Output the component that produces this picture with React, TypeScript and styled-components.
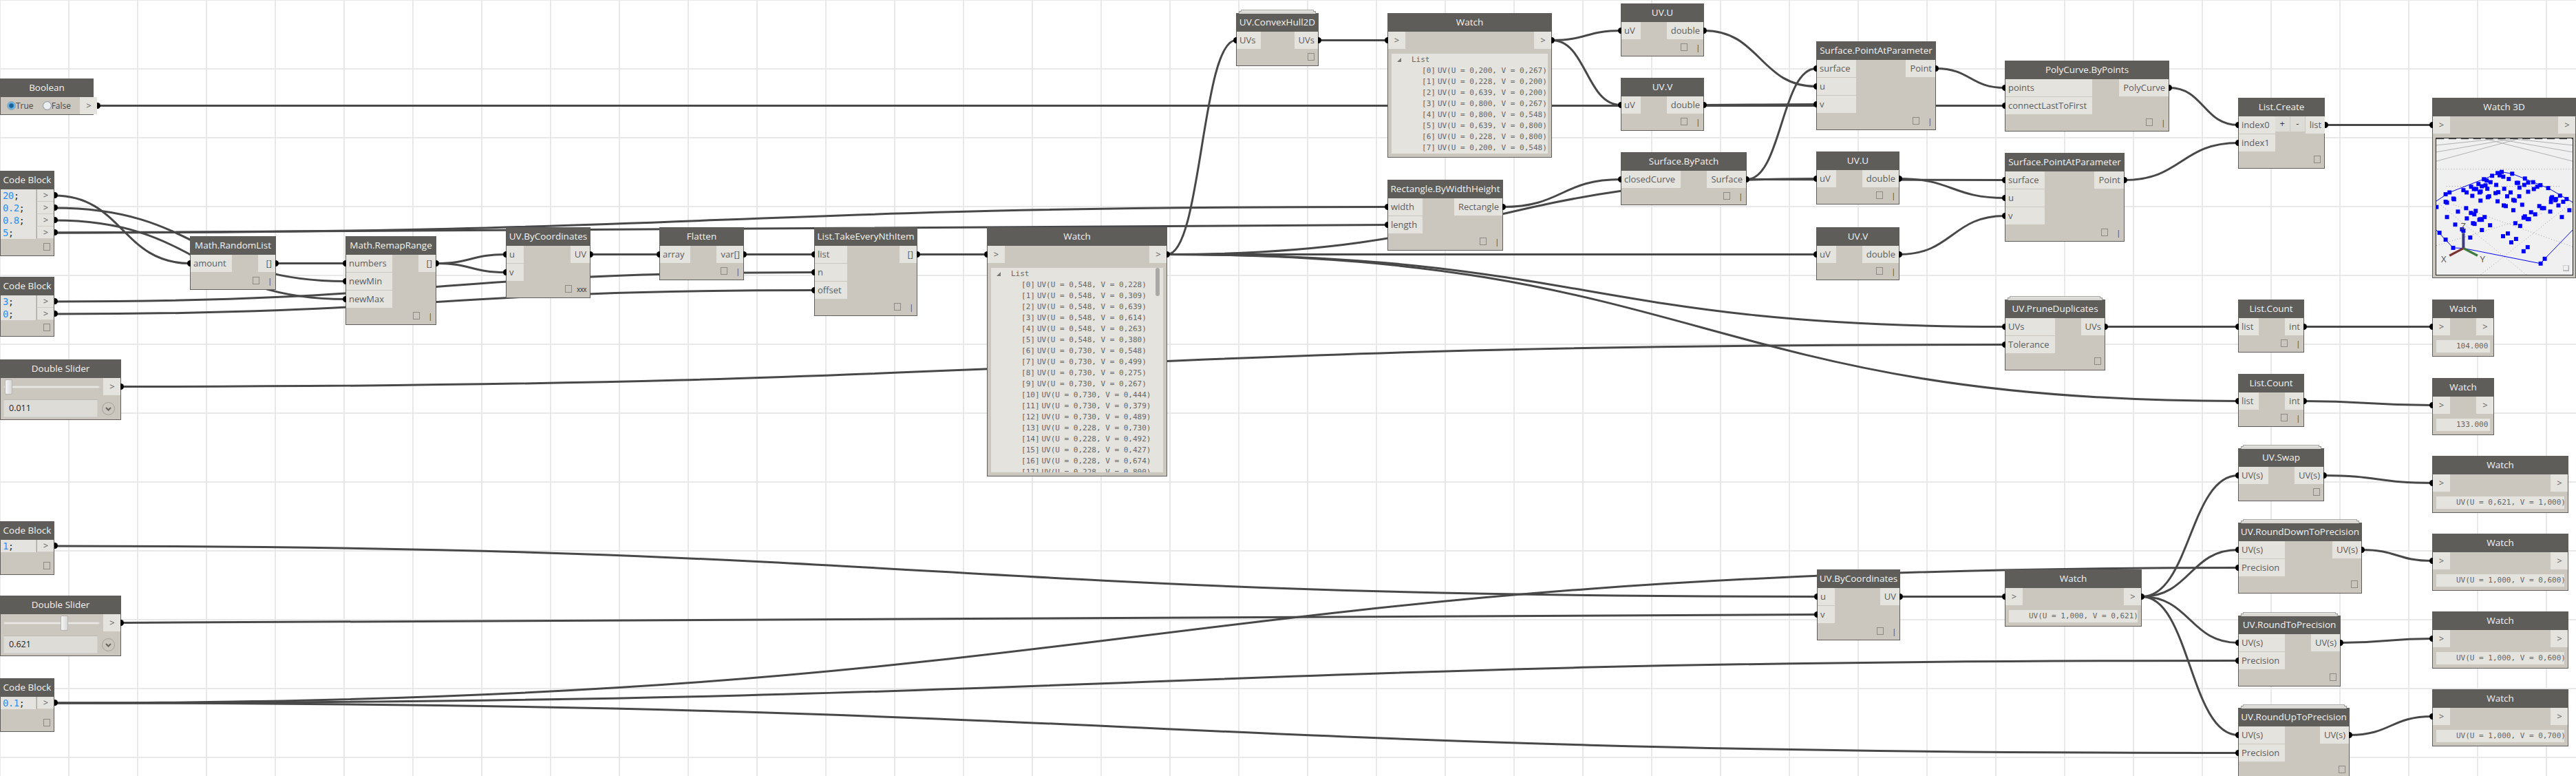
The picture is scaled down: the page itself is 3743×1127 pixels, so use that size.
import React from "react";
import styled, { createGlobalStyle } from "styled-components";

const Global = createGlobalStyle`
  html, body { margin: 0; padding: 0; background: #fff; overflow: hidden; }
  * { box-sizing: border-box; }
`;

const Canvas = styled.div`
  position: relative;
  width: 3743px;
  height: 1127px;
  overflow: hidden;
  background-color: #fff;
  background-image:
    linear-gradient(to right, #e8e8e8 2px, transparent 2px),
    linear-gradient(to bottom, #e8e8e8 2px, transparent 2px);
  background-size: 100px 100px;
  background-position: -1px -1px;
  font-family: "Open Sans", "Noto Sans", sans-serif;
`;

const Wires = styled.svg`
  position: absolute;
  left: 0;
  top: 0;
`;

const Wire = styled.path`
  fill: none;
  stroke: #484848;
  stroke-width: 3;
`;

const NodeBox = styled.div<{ $x: number; $y: number; $w: number; $h: number; $stacked?: boolean }>`
  position: absolute;
  left: ${(p) => p.$x}px;
  top: ${(p) => p.$y}px;
  width: ${(p) => p.$w}px;
  height: ${(p) => p.$h}px;
  display: flex;
  flex-direction: column;
  background: #cbc6be;
  border: 1px solid #5e5d5a;
  border-top: 0;
  ${(p) =>
    p.$stacked
      ? `
    &::before {
      content: "";
      position: absolute;
      left: 3px;
      right: 3px;
      top: -3px;
      height: 3px;
      background: #d9d7d2;
      border: 1px solid #9a9a96;
      border-bottom: 0;
    }
    &::after {
      content: "";
      position: absolute;
      left: 6px;
      right: 6px;
      top: -5px;
      height: 2px;
      background: #e2e0dc;
      border: 1px solid #a8a8a4;
      border-bottom: 0;
    }
  `
      : ""}
`;

const Header = styled.div`
  flex: none;
  height: 27px;
  margin: 0 -1px;
  background: #5e5d5a;
  color: #f4f4f2;
  font-size: 13.5px;
  line-height: 27px;
  text-align: center;
  white-space: nowrap;
  overflow: hidden;
`;

const Ports = styled.div`
  display: flex;
  justify-content: space-between;
  align-items: flex-start;
`;

const Column = styled.div`
  display: flex;
  flex-direction: column;
  gap: 1px;
`;

const Port = styled.div<{ $side: "in" | "out"; $wired?: boolean }>`
  position: relative;
  height: 25px;
  min-width: 25px;
  background: #e4e3de;
  color: #5c5c5c;
  font-size: 13px;
  line-height: 25px;
  white-space: nowrap;
  padding: ${(p) => (p.$side === "in" ? "0 8px 0 4px" : "0 5px 0 6px")};
  text-align: ${(p) => (p.$side === "in" ? "left" : "right")};
  ${(p) =>
    p.$wired
      ? `
    &::after {
      content: "";
      position: absolute;
      top: 8px;
      width: 5px;
      height: 9px;
      background: #000;
      ${
        p.$side === "in"
          ? "left: -5px; border-radius: 5px 0 0 5px;"
          : "right: -5px; border-radius: 0 5px 5px 0;"
      }
    }
  `
      : ""}
`;

const Chevron = styled(Port)`
  text-align: center;
  padding: 0 0 0 ${(p) => (p.$side === "in" ? "0" : "1px")};
  width: 25px;
`;

const PlusMinus = styled.div`
  width: 21px;
  height: 22px;
  background: #dedcd7;
  color: #333;
  font-size: 13px;
  line-height: 20px;
  text-align: center;
`;

const PlusMinusRow = styled.div`
  display: flex;
  gap: 1px;
  margin: 0 1px 0 0;
`;

const Footer = styled.div`
  margin-top: auto;
  display: flex;
  justify-content: flex-end;
  align-items: flex-end;
  padding: 0 5px 7px 0;
`;

const PreviewBox = styled.span`
  display: block;
  width: 10px;
  height: 11px;
  border: 1px solid #8b8a85;
`;

const Lacing = styled.span<{ $wide?: boolean }>`
  display: block;
  margin-left: ${(p) => (p.$wide ? "7px" : "13px")};
  color: #333;
  font-size: 10px;
  line-height: 10px;
  letter-spacing: ${(p) => (p.$wide ? "-0.6px" : "0")};
`;

const CodeRows = styled.div`
  display: flex;
  justify-content: space-between;
`;

const CodeArea = styled.div`
  flex: 1;
  background: #e5e3df;
  padding-left: 3px;
  font-family: "DejaVu Sans Mono", monospace;
  font-size: 14px;
  letter-spacing: -0.6px;
  line-height: 18px;
  color: #333;
`;

const Num = styled.span`
  color: #2f8ff0;
`;

const CodeOut = styled(Port)`
  height: 18px;
  width: 25px;
  margin: 0;
  padding: 0 0 0 1px;
  line-height: 17px;
  text-align: center;
  border-left: 1px solid #a9a69f;
  border-bottom: 1px solid #cfccc5;
  &::after {
    top: 4px;
    right: -6px;
  }
`;

const CodeColumn = styled.div`
  margin-left: 1px;
  display: flex;
  flex-direction: column;
`;

const BoolRow = styled.div`
  display: flex;
  align-items: center;
  justify-content: space-between;
`;

const RadioGroup = styled.div`
  display: flex;
  align-items: center;
  padding-left: 9px;
  color: #4a4a4a;
  font-size: 12px;
`;

const Radio = styled.span<{ $on?: boolean }>`
  display: block;
  width: 13px;
  height: 13px;
  border-radius: 50%;
  border: 1px solid #8c9aa6;
  background: ${(p) =>
    p.$on
      ? "radial-gradient(circle, #1a5f90 0 28%, #5fb0e8 55%, #dfe7ec 100%)"
      : "radial-gradient(circle, #eceff1 0 50%, #c5cacd 100%)"};
`;

const RadioLabel = styled.span`
  margin-right: 13px;
`;

const SliderRow = styled.div`
  display: flex;
  justify-content: space-between;
  align-items: center;
`;

const Track = styled.div`
  position: relative;
  width: 140px;
  height: 4px;
  margin-left: 4px;
  background: #e9e8e4;
  border: 1px solid #d3d1cb;
  border-radius: 2px;
`;

const Thumb = styled.div<{ $pos: number }>`
  position: absolute;
  left: ${(p) => p.$pos}px;
  top: -10px;
  width: 11px;
  height: 22px;
  border: 1px solid #b5b4b0;
  border-radius: 2px;
  background: linear-gradient(to right, #f6f6f6, #d8d8d8);
`;

const ValueRow = styled.div`
  display: flex;
  align-items: center;
  justify-content: space-between;
  padding: 6px 8px 0 4px;
`;

const ValueBox = styled.div`
  width: 137px;
  height: 26px;
  padding-left: 7px;
  background: #dedcd7;
  border: 1px solid #cfd0cf;
  border-top-color: #b9b7b1;
  color: #222;
  font-size: 12.5px;
  line-height: 24px;
`;

const Drop = styled.svg`
  display: block;
  flex: none;
`;

const WatchValue = styled.div`
  margin: 7px 5px 0;
  height: 18px;
  padding-left: 29px;
  background: #e4e3de;
  color: #666;
  font-family: "DejaVu Sans Mono", monospace;
  font-size: 11px;
  line-height: 18px;
  white-space: nowrap;
  overflow: hidden;
`;

const ListBox = styled.div`
  position: relative;
  margin: 7px 5px 5px;
  flex: 1;
  min-height: 0;
  background: #e4e3de;
  color: #666;
  font-family: "DejaVu Sans Mono", monospace;
  font-size: 11px;
  line-height: 16px;
  white-space: nowrap;
  overflow: hidden;
  padding-top: 1px;
`;

const ListHead = styled.div`
  display: flex;
  align-items: center;
  padding-left: 8px;
  height: 16px;
`;

const Triangle = styled.span`
  width: 0;
  height: 0;
  margin-right: 15px;
  border-left: 6px solid transparent;
  border-bottom: 6px solid #777;
`;

const ListRow = styled.div`
  display: flex;
  height: 16px;
  padding-left: 44px;
`;

const ListIndex = styled.span`
  margin-right: 3px;
`;

const ScrollThumb = styled.div`
  position: absolute;
  right: 5px;
  top: 0;
  width: 6px;
  height: 41px;
  border-radius: 3px;
  background: #aaa9a5;
`;

const View3D = styled.div`
  flex: none;
  width: 200px;
  height: 200px;
  margin: 6px 0 0 4px;
  background: #f0f0f0;
  border: 1px solid #222;
`;

type Kind = "fn" | "code" | "watch" | "slider" | "bool" | "watch3d" | "create";

type NodeDef = {
  id: string;
  title: string;
  kind: Kind;
  x: number;
  y: number;
  w: number;
  h: number;
  inputs?: string[];
  outputs?: string[];
  lacing?: string;
  stacked?: boolean;
  code?: [string, string][];
  value?: string;
  list?: [string, string][];
  scroll?: boolean;
  thumb?: number;
};

const fn = (
  id: string,
  title: string,
  x: number,
  y: number,
  w: number,
  h: number,
  inputs: string[],
  outputs: string[],
  lacing?: string,
  stacked?: boolean
): NodeDef => ({ id, title, kind: "fn", x, y, w, h, inputs, outputs, lacing, stacked });

const watch = (id: string, x: number, y: number, w: number, value: string): NodeDef => ({
  id,
  title: "Watch",
  kind: "watch",
  x,
  y,
  w,
  h: 83,
  inputs: [">"],
  outputs: [">"],
  value,
});

const bigList: [string, string][] = [
  ["0,548", "0,228"], ["0,548", "0,309"], ["0,548", "0,639"], ["0,548", "0,614"],
  ["0,548", "0,263"], ["0,548", "0,380"], ["0,730", "0,548"], ["0,730", "0,499"],
  ["0,730", "0,275"], ["0,730", "0,267"], ["0,730", "0,444"], ["0,730", "0,379"],
  ["0,730", "0,489"], ["0,228", "0,730"], ["0,228", "0,492"], ["0,228", "0,427"],
  ["0,228", "0,674"], ["0,228", "0,800"],
];

const hullList: [string, string][] = [
  ["0,200", "0,267"], ["0,228", "0,200"], ["0,639", "0,200"], ["0,800", "0,267"],
  ["0,800", "0,548"], ["0,639", "0,800"], ["0,228", "0,800"], ["0,200", "0,548"],
];

const nodes: NodeDef[] = [
  { id: "bool", title: "Boolean", kind: "bool", x: 0, y: 114, w: 136, h: 53, outputs: [">"] },
  {
    id: "cb1", title: "Code Block", kind: "code", x: 0, y: 248, w: 79, h: 124,
    code: [["20", ";"], ["0.2", ";"], ["0.8", ";"], ["5", ";"]],
  },
  {
    id: "cb2", title: "Code Block", kind: "code", x: 0, y: 402, w: 79, h: 87,
    code: [["3", ";"], ["0", ";"]],
  },
  { id: "s1", title: "Double Slider", kind: "slider", x: 0, y: 522, w: 176, h: 88, value: "0.011", thumb: 1, outputs: [">"] },
  { id: "cb3", title: "Code Block", kind: "code", x: 0, y: 757, w: 79, h: 78, code: [["1", ";"]] },
  { id: "s2", title: "Double Slider", kind: "slider", x: 0, y: 865, w: 176, h: 88, value: "0.621", thumb: 82, outputs: [">"] },
  { id: "cb4", title: "Code Block", kind: "code", x: 0, y: 985, w: 79, h: 78, code: [["0.1", ";"]] },
  fn("rand", "Math.RandomList", 276, 343, 125, 78, ["amount"], ["[]"], "|"),
  fn("remap", "Math.RemapRange", 502, 343, 132, 129, ["numbers", "newMin", "newMax"], ["[]"], "|"),
  fn("uv1", "UV.ByCoordinates", 735, 330, 123, 103, ["u", "v"], ["UV"], "xxx"),
  fn("flat", "Flatten", 958, 330, 123, 77, ["array"], ["var[]"], "|"),
  fn("take", "List.TakeEveryNthItem", 1183, 330, 150, 129, ["list", "n", "offset"], ["[]"], "|"),
  {
    id: "w1", title: "Watch", kind: "watch", x: 1434, y: 330, w: 262, h: 362,
    inputs: [">"], outputs: [">"], list: bigList, scroll: true,
  },
  fn("hull", "UV.ConvexHull2D", 1796, 19, 120, 77, ["UVs"], ["UVs"], undefined, true),
  {
    id: "w2", title: "Watch", kind: "watch", x: 2016, y: 19, w: 239, h: 210,
    inputs: [">"], outputs: [">"], list: hullList,
  },
  fn("rect", "Rectangle.ByWidthHeight", 2016, 261, 168, 103, ["width", "length"], ["Rectangle"], "|"),
  fn("u1", "UV.U", 2355, 5, 121, 77, ["uV"], ["double"], "|"),
  fn("v1", "UV.V", 2355, 113, 121, 77, ["uV"], ["double"], "|"),
  fn("patch", "Surface.ByPatch", 2355, 221, 183, 77, ["closedCurve"], ["Surface"], "|"),
  fn("pap1", "Surface.PointAtParameter", 2639, 60, 174, 129, ["surface", "u", "v"], ["Point"], "|"),
  fn("u2", "UV.U", 2639, 220, 121, 77, ["uV"], ["double"], "|"),
  fn("v2", "UV.V", 2639, 330, 121, 77, ["uV"], ["double"], "|"),
  fn("poly", "PolyCurve.ByPoints", 2913, 88, 239, 103, ["points", "connectLastToFirst"], ["PolyCurve"], "|"),
  fn("pap2", "Surface.PointAtParameter", 2913, 222, 174, 129, ["surface", "u", "v"], ["Point"], "|"),
  { id: "create", title: "List.Create", kind: "create", x: 3252, y: 142, w: 126, h: 103, inputs: ["index0", "index1"], outputs: ["list"] },
  { id: "w3d", title: "Watch 3D", kind: "watch3d", x: 3534, y: 142, w: 209, h: 262, inputs: [">"], outputs: [">"] },
  fn("prune", "UV.PruneDuplicates", 2913, 435, 146, 103, ["UVs", "Tolerance"], ["UVs"], undefined, true),
  fn("count1", "List.Count", 3252, 435, 96, 77, ["list"], ["int"], "|"),
  fn("count2", "List.Count", 3252, 543, 96, 77, ["list"], ["int"], "|"),
  watch("wc1", 3534, 435, 90, "104.000"),
  watch("wc2", 3534, 549, 90, "133.000"),
  fn("uv2", "UV.ByCoordinates", 2640, 827, 121, 103, ["u", "v"], ["UV"], "|"),
  watch("wm", 2913, 827, 199, "UV(U = 1,000, V = 0,621)"),
  fn("swap", "UV.Swap", 3252, 651, 125, 77, ["UV(s)"], ["UV(s)"], undefined, true),
  fn("down", "UV.RoundDownToPrecision", 3252, 759, 180, 103, ["UV(s)", "Precision"], ["UV(s)"], undefined, true),
  fn("round", "UV.RoundToPrecision", 3252, 894, 149, 103, ["UV(s)", "Precision"], ["UV(s)"], undefined, true),
  fn("up", "UV.RoundUpToPrecision", 3252, 1028, 162, 103, ["UV(s)", "Precision"], ["UV(s)"], undefined, true),
  watch("wa", 3534, 662, 198, "UV(U = 0,621, V = 1,000)"),
  watch("wb", 3534, 775, 198, "UV(U = 1,000, V = 0,600)"),
  watch("wr", 3534, 888, 198, "UV(U = 1,000, V = 0,600)"),
  watch("wd", 3534, 1001, 198, "UV(U = 1,000, V = 0,700)"),
];

type Link = [string, number, string, number];

const links: Link[] = [
  ["bool", 0, "poly", 1],
  ["cb1", 0, "rand", 0],
  ["cb1", 1, "remap", 1],
  ["cb1", 2, "remap", 2],
  ["cb1", 3, "rect", 0],
  ["cb1", 3, "rect", 1],
  ["cb2", 0, "take", 1],
  ["cb2", 1, "take", 2],
  ["s1", 0, "prune", 1],
  ["rand", 0, "remap", 0],
  ["remap", 0, "uv1", 0],
  ["remap", 0, "uv1", 1],
  ["uv1", 0, "flat", 0],
  ["flat", 0, "take", 0],
  ["take", 0, "w1", 0],
  ["w1", 0, "hull", 0],
  ["w1", 0, "v2", 0],
  ["w1", 0, "u2", 0],
  ["w1", 0, "prune", 0],
  ["w1", 0, "count2", 0],
  ["hull", 0, "w2", 0],
  ["w2", 0, "u1", 0],
  ["w2", 0, "v1", 0],
  ["u1", 0, "pap1", 1],
  ["v1", 0, "pap1", 2],
  ["rect", 0, "patch", 0],
  ["patch", 0, "pap1", 0],
  ["patch", 0, "pap2", 0],
  ["u2", 0, "pap2", 1],
  ["v2", 0, "pap2", 2],
  ["pap1", 0, "poly", 0],
  ["poly", 0, "create", 0],
  ["pap2", 0, "create", 1],
  ["create", 0, "w3d", 0],
  ["prune", 0, "count1", 0],
  ["count1", 0, "wc1", 0],
  ["count2", 0, "wc2", 0],
  ["cb3", 0, "uv2", 0],
  ["s2", 0, "uv2", 1],
  ["uv2", 0, "wm", 0],
  ["wm", 0, "swap", 0],
  ["wm", 0, "down", 0],
  ["wm", 0, "round", 0],
  ["wm", 0, "up", 0],
  ["cb4", 0, "down", 1],
  ["cb4", 0, "round", 1],
  ["cb4", 0, "up", 1],
  ["swap", 0, "wa", 0],
  ["down", 0, "wb", 0],
  ["round", 0, "wr", 0],
  ["up", 0, "wd", 0],
];

const byId = new Map(nodes.map((n) => [n.id, n]));

const portY = (n: NodeDef, i: number) =>
  n.kind === "code" ? n.y + 27 + 9 + 18 * i : n.y + 27 + 12.5 + 26 * i;

const wirePath = ([a, i, b, j]: Link) => {
  const s = byId.get(a)!;
  const t = byId.get(b)!;
  const x0 = s.x + s.w;
  const y0 = portY(s, i);
  const x1 = t.x;
  const y1 = portY(t, j);
  const d = Math.abs(x1 - x0) / 2;
  return `M${x0} ${y0} C${x0 + d} ${y0} ${x1 - d} ${y1} ${x1} ${y1}`;
};

const wiredIn = new Set(links.map((l) => `${l[2]}:${l[3]}`));
const wiredOut = new Set(links.map((l) => `${l[0]}:${l[1]}`));

const NodeFooter = ({ lacing }: { lacing?: string }) => (
  <Footer>
    <PreviewBox />
    {lacing ? <Lacing $wide={lacing === "xxx"}>{lacing}</Lacing> : null}
  </Footer>
);

const InputColumn = ({ n }: { n: NodeDef }) => (
  <Column>
    {(n.inputs ?? []).map((label, i) =>
      label === ">" ? (
        <Chevron key={i} $side="in" $wired={wiredIn.has(`${n.id}:${i}`)}>
          {label}
        </Chevron>
      ) : (
        <Port key={i} $side="in" $wired={wiredIn.has(`${n.id}:${i}`)}>
          {label}
        </Port>
      )
    )}
  </Column>
);

const OutputColumn = ({ n }: { n: NodeDef }) => (
  <Column>
    {(n.outputs ?? []).map((label, i) =>
      label === ">" ? (
        <Chevron key={i} $side="out" $wired={wiredOut.has(`${n.id}:${i}`)}>
          {label}
        </Chevron>
      ) : (
        <Port key={i} $side="out" $wired={wiredOut.has(`${n.id}:${i}`)}>
          {label}
        </Port>
      )
    )}
  </Column>
);

const squares: number[][] = [
  [342,357],[324,362],[333,372],[349,378],[388,365],[300,374],[264,389],[276,395],[293,402],[373,388],
  [444,386],[240,410],[255,420],[271,416],[318,414],[408,405],[414,405],[441,414],[458,404],[480,402],
  [512,415],[498,422],[483,432],[546,428],[208,422],[220,432],[230,432],[174,437],[188,447],[113,447],
  [96,455],[279,431],[353,431],[420,426],[250,443],[245,447],[458,444],[381,447],[315,450],[327,446],
  [213,462],[287,464],[281,468],[366,464],[419,464],[563,468],[559,474],[580,476],[578,481],[598,461],
  [627,476],[612,488],[558,489],[130,474],[133,477],[96,488],[102,492],[249,483],[324,486],[393,480],
  [399,483],[432,501],[591,504],[507,507],[519,516],[528,516],[351,504],[360,507],[56,511],[186,516],
  [150,531],[228,528],[207,537],[222,543],[393,525],[471,534],[489,543],[555,531],[639,525],[102,555],
  [189,561],[267,555],[249,564],[244,567],[255,567],[444,552],[438,558],[456,564],[462,564],[606,555],
  [138,588],[216,582],[223,585],[291,591],[402,582],[423,594],[168,609],[174,615],[255,612],[69,624],
  [369,627],[348,639],[204,645],[96,654],[405,651],[384,666],[129,690],[456,687],[438,705],[531,738],[513,759],
];

const Preview = () => (
  <svg width="198" height="198" viewBox="55 210 598 598">
    <g stroke="#b0b0b0" strokeWidth="3" fill="none">
      <path d="M55 240L320 212M55 270L385 212M55 310L415 212M653 240L390 212M653 270L320 212M653 310L270 212" />
    </g>
    <path d="M55 212H653" stroke="#333" strokeWidth="3" strokeDasharray="34 20" />
    <g stroke="#9c9c9c" strokeWidth="3" fill="none" strokeDasharray="3 9">
      <path d="M250 808L653 490M450 808L60 490M55 680L520 540M653 685L130 500M60 345L650 345M100 420L600 420" />
    </g>
    <g stroke="#0000ff" strokeWidth="3" fill="none">
      <path d="M55 485L113 447L300 374L342 357L388 365L546 428L653 490" />
      <path d="M653 612L531 738L513 759L175 692L129 690L55 612" />
    </g>
    <g fill="#0000ff">
      {squares.map(([x, y], i) => (
        <rect key={i} x={x - 9} y={y - 9} width="18" height="18" />
      ))}
    </g>
    <path d="M174 692V625" stroke="#3d3d7d" strokeWidth="12" />
    <path d="M174 692L113 724" stroke="#7c3434" strokeWidth="10" />
    <path d="M174 692L236 724" stroke="#3f7a3f" strokeWidth="10" />
    <g fill="#555" fontFamily="'Open Sans', sans-serif" fontSize="40">
      <text x="162" y="610">Z</text>
      <text x="76" y="755">X</text>
      <text x="247" y="755">Y</text>
    </g>
    <path d="M612 790H636V768" stroke="#999" strokeWidth="4" fill="none" />
    <rect x="612" y="768" width="24" height="22" fill="none" stroke="#bbb" strokeWidth="2" />
  </svg>
);

const NodeView = ({ n }: { n: NodeDef }) => {
  let body: React.ReactNode = null;
  switch (n.kind) {
    case "fn":
      body = (
        <>
          <Ports>
            <InputColumn n={n} />
            <OutputColumn n={n} />
          </Ports>
          <NodeFooter lacing={n.lacing} />
        </>
      );
      break;
    case "create":
      body = (
        <>
          <Ports>
            <InputColumn n={n} />
            <PlusMinusRow>
              <PlusMinus>+</PlusMinus>
              <PlusMinus>-</PlusMinus>
            </PlusMinusRow>
            <OutputColumn n={n} />
          </Ports>
          <NodeFooter />
        </>
      );
      break;
    case "code":
      body = (
        <>
          <CodeRows>
            <CodeArea>
              {(n.code ?? []).map(([num, rest], i) => (
                <div key={i}>
                  <Num>{num}</Num>
                  {rest}
                </div>
              ))}
            </CodeArea>
            <CodeColumn>
              {(n.code ?? []).map((_, i) => (
                <CodeOut key={i} $side="out" $wired={wiredOut.has(`${n.id}:${i}`)}>
                  {">"}
                </CodeOut>
              ))}
            </CodeColumn>
          </CodeRows>
          <NodeFooter />
        </>
      );
      break;
    case "bool":
      body = (
        <BoolRow>
          <RadioGroup>
            <Radio $on />
            <RadioLabel>True</RadioLabel>
            <Radio />
            <RadioLabel>False</RadioLabel>
          </RadioGroup>
          <OutputColumn n={n} />
        </BoolRow>
      );
      break;
    case "slider":
      body = (
        <>
          <SliderRow>
            <Track>
              <Thumb $pos={n.thumb ?? 0} />
            </Track>
            <OutputColumn n={n} />
          </SliderRow>
          <ValueRow>
            <ValueBox>{n.value}</ValueBox>
            <Drop width="19" height="19" viewBox="0 0 19 19">
              <circle cx="9.5" cy="9.5" r="9" fill="#cbc6be" stroke="#a5a29b" />
              <path d="M6 8l3.5 3.5L13 8" fill="none" stroke="#66645f" strokeWidth="2" />
            </Drop>
          </ValueRow>
        </>
      );
      break;
    case "watch":
      body = (
        <>
          <Ports>
            <InputColumn n={n} />
            <OutputColumn n={n} />
          </Ports>
          {n.list ? (
            <ListBox>
              <ListHead>
                <Triangle />
                List
              </ListHead>
              {n.list.map(([u, v], i) => (
                <ListRow key={i}>
                  <ListIndex>[{i}]</ListIndex>
                  UV(U = {u}, V = {v})
                </ListRow>
              ))}
              {n.scroll ? <ScrollThumb /> : null}
            </ListBox>
          ) : (
            <WatchValue>{n.value}</WatchValue>
          )}
        </>
      );
      break;
    case "watch3d":
      body = (
        <>
          <Ports>
            <InputColumn n={n} />
            <OutputColumn n={n} />
          </Ports>
          <View3D>
            <Preview />
          </View3D>
        </>
      );
      break;
  }
  return (
    <NodeBox $x={n.x} $y={n.y} $w={n.w} $h={n.h} $stacked={n.stacked}>
      <Header>{n.title}</Header>
      {body}
    </NodeBox>
  );
};

export default function App() {
  return (
    <Canvas>
      <Global />
      <Wires width="3743" height="1127">
        {links.map((l, i) => (
          <Wire key={i} d={wirePath(l)} />
        ))}
      </Wires>
      {nodes.map((n) => (
        <NodeView key={n.id} n={n} />
      ))}
    </Canvas>
  );
}
